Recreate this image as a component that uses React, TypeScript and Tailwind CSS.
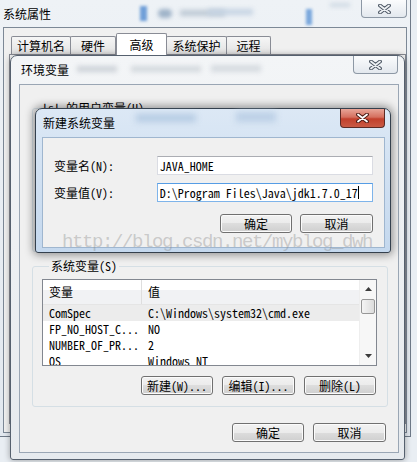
import type { ReactNode } from "react";

const cjk = "font-['Noto_Sans_CJK_SC','Noto_Sans',sans-serif]";
const ui = "font-['Noto_Sans_Mono_CJK_SC','Liberation_Mono','Noto_Sans_CJK_SC',monospace]";

type Tab = { label: string; w: string; active?: boolean };

const tabs: Tab[] = [
    { label: "计算机名", w: "w-[60px]" },
    { label: "硬件", w: "w-[46px]" },
    { label: "高级", w: "w-[51px]", active: true },
    { label: "系统保护", w: "w-[61px]" },
    { label: "远程", w: "w-[45px]" },
];

const rows = [
    { name: "ComSpec", value: "C:\\Windows\\system32\\cmd.exe", sel: true },
    { name: "FP_NO_HOST_C...", value: "NO" },
    { name: "NUMBER_OF_PR...", value: "2" },
    { name: "OS", value: "Windows_NT" },
];

// the "x" glyph on the title bar close buttons
function CloseGlyph({ red }: { red?: boolean }) {
    return (
        <svg width="13" height="10" viewBox="0 0 13 10">
            <path d="M2 1.5 L11 8.5 M11 1.5 L2 8.5" stroke={red ? "#4a1a14" : "#4c5663"} strokeWidth="3.8" strokeLinecap="round" />
            <path d="M2 1.5 L11 8.5 M11 1.5 L2 8.5" stroke={red ? "#ffffff" : "#eef1f4"} strokeWidth="1.8" strokeLinecap="round" />
        </svg>
    );
}

function Btn({ children, w }: { children: ReactNode; w: string }) {
    return (
        <div
            className={`${w} h-[19px] shrink-0 rounded-[3px] border border-[#707070] shadow-[inset_0_0_0_1px_#fbfbfb] bg-[linear-gradient(#f2f2f2_0%,#ebebeb_50%,#dddddd_50%,#cfcfcf_100%)] flex items-center justify-center text-[12px] leading-[12px] ${ui}`}
        >
            {children}
        </div>
    );
}

function SystemProps() {
    return (
        <div className="absolute left-0 top-0 w-[411px] h-[437px] border-r border-b border-[#6f7a88] bg-[linear-gradient(180deg,#eef2f6,#e2e8ef)]">
            {/* blurred desktop behind the glass */}
            <div className="absolute left-[140px] top-[6px] w-[7px] h-[15px] bg-[#6f9fd8] blur-[1.5px]" />
            <div className="absolute left-[158px] top-[9px] w-[14px] h-[9px] rounded-full bg-[#9fb3c8] blur-[2px]" />
            <div className="absolute left-[180px] top-[10px] w-[45px] h-[6px] bg-[#bcc8d4] blur-[2.5px]" />
            <div className="absolute left-[208px] top-[9px] w-[45px] h-[6px] bg-[#c6d4e3] blur-[2.5px]" />
            <div className="absolute left-[306px] top-[9px] w-[6px] h-[16px] bg-[#79a7dc] blur-[1.5px]" />
            <div className="absolute left-[330px] top-[3px] w-[20px] h-[4px] bg-[#cfd9e3] blur-[2px]" />

            <div className={`relative h-[27px] flex items-center pl-[3px] text-[12px] leading-[12px] ${cjk}`}>系统属性</div>
            <div className="absolute right-[3px] top-0 w-[46px] h-[18px] rounded-b-[4px] border border-t-0 border-[#8d98a5] bg-[linear-gradient(#fbfcfd,#e3e8ee)] flex items-center justify-center">
                <CloseGlyph />
            </div>

            <div className="ml-[3px] w-[404px] h-[406px] border border-[#7c8896] bg-[#f0f0f0]">
                <div className="flex items-end h-[26px] pl-[8px]">
                    {tabs.map((t) => (
                        <div
                            key={t.label}
                            className={
                                t.active
                                    ? `${t.w} h-[22px] -mb-px relative z-10 border border-b-0 border-[#898c95] rounded-t-[2px] bg-white flex items-center justify-center text-[12px] leading-[12px] ${ui}`
                                    : `${t.w} h-[18px] -ml-px border border-b-0 border-[#898c95] rounded-t-[2px] bg-[linear-gradient(#f6f6f6,#e2e2e2)] flex items-center justify-center text-[12px] leading-[12px] ${ui}`
                            }
                        >
                            {t.label}
                        </div>
                    ))}
                </div>
                <div className="ml-[5px] h-[370px] border-t border-l border-r border-[#898c95] bg-[#f9f9f9]" />
            </div>
        </div>
    );
}

function ListBox() {
    return (
        <div className="flex w-[335px] h-[87px] border border-[#828790] bg-white overflow-hidden">
            <div className="flex-1 overflow-hidden">
                <div className={`h-[25px] flex border-b border-[#e5e5e5] bg-[linear-gradient(#ffffff_0%,#ffffff_42%,#f1f2f4_42%,#f1f2f4_100%)] text-[12px] leading-[12px] ${ui}`}>
                    <div className="w-[99px] pl-[6px] border-r border-[#dedede] flex items-center">变量</div>
                    <div className="pl-[6px] flex items-center">值</div>
                </div>
                {rows.map((r) => (
                    <div key={r.name} className={`h-[16px] flex items-center text-[12px] leading-[12px] whitespace-nowrap ${ui} ${r.sel ? "bg-[#ececec]" : ""}`}>
                        <div className="w-[99px] pl-[6px] shrink-0">{r.name}</div>
                        <div className="pl-[6px]">{r.value}</div>
                    </div>
                ))}
            </div>
            <div className="w-[17px] flex flex-col bg-[#f7f7f7] border-l border-[#eeeeee]">
                <div className="h-[18px] flex items-center justify-center">
                    <svg width="7" height="4" viewBox="0 0 7 4"><path d="M0 4 L3.5 0 L7 4 Z" fill="#3c3c3c" /></svg>
                </div>
                <div className="mt-px mx-px h-[15px] rounded-[2px] border border-[#979797] bg-[linear-gradient(90deg,#f4f4f4,#dcdcdc)]" />
                <div className="flex-1" />
                <div className="h-[18px] flex items-center justify-center">
                    <svg width="7" height="4" viewBox="0 0 7 4"><path d="M0 0 L3.5 4 L7 0 Z" fill="#3c3c3c" /></svg>
                </div>
            </div>
        </div>
    );
}

function EnvVars() {
    return (
        <div className="absolute left-[10px] top-[55px] w-[395px] h-[405px] rounded-t-[7px] rounded-b-[3px] border border-[#55606e] bg-[linear-gradient(180deg,#f3f5f7,#e6eaee)] shadow-[0_0_6px_rgba(0,0,0,0.35)]">
            <div className="absolute left-[66px] top-[10px] w-[40px] h-[6px] bg-[#cdd2d8] blur-[2.5px]" />
            <div className="absolute left-[120px] top-[10px] w-[70px] h-[6px] bg-[#d3d8dd] blur-[2.5px]" />
            <div className="absolute left-[200px] top-[9px] w-[50px] h-[7px] bg-[#d6dbe0] blur-[2.5px]" />

            <div className={`relative h-[28px] flex items-center pl-[10px] text-[12px] leading-[12px] ${cjk}`}>环境变量</div>
            <div className="absolute right-[6px] top-0 w-[45px] h-[18px] rounded-b-[4px] border border-t-0 border-[#8d98a5] bg-[linear-gradient(#fbfcfd,#e3e8ee)] flex items-center justify-center">
                <CloseGlyph />
            </div>

            <div className="ml-[8px] w-[380px] h-[369px] border border-[#9aa6b4] bg-[#f0f0f0]">
                <fieldset className="mt-[17px] ml-[12px] w-[356px] h-[150px] rounded-[3px] border border-[#d5dfe5]">
                    <legend className={`ml-[7px] px-[2px] text-[12px] leading-[12px] ${ui}`}>lsl 的用户变量(U)</legend>
                </fieldset>
                <fieldset className="mt-[8px] ml-[12px] w-[356px] h-[147px] rounded-[3px] border border-[#d5dfe5] pl-[9px] pt-[7px]">
                    <legend className={`ml-[7px] px-[2px] text-[12px] leading-[12px] ${ui}`}>系统变量(S)</legend>
                    <ListBox />
                    <div className="mt-[10px] w-[334px] flex justify-end gap-[9px]">
                        <Btn w="w-[72px]">新建(W)...</Btn>
                        <Btn w="w-[73px]">编辑(I)...</Btn>
                        <Btn w="w-[72px]">删除(L)</Btn>
                    </div>
                </fieldset>
                <div className="mt-[16px] pr-[12px] flex justify-end gap-[9px]">
                    <Btn w="w-[72px]">确定</Btn>
                    <Btn w="w-[73px]">取消</Btn>
                </div>
            </div>
        </div>
    );
}

function NewVarDialog() {
    return (
        <div className="absolute left-[35px] top-[108px] w-[356px] h-[145px] rounded-t-[7px] rounded-b-[3px] border border-[#34404d] bg-[linear-gradient(180deg,#dce8f5,#c4d8ee)] shadow-[0_0_9px_2px_rgba(0,0,0,0.4)]">
            <div className="absolute left-[100px] top-[5px] w-[60px] h-[8px] bg-[#b5cbe3] blur-[3px]" />
            <div className="absolute left-[200px] top-[3px] w-[40px] h-[10px] bg-[#bcd0e6] blur-[3px]" />

            <div className={`relative h-[28px] flex items-center pl-[7px] text-[12px] leading-[12px] ${cjk}`}>新建系统变量</div>
            <div className="absolute right-[5px] top-0 w-[45px] h-[19px] rounded-b-[4px] border border-t-0 border-[#5c2a24] bg-[linear-gradient(#e8a598_0%,#d5705f_45%,#c2402c_55%,#c95a44_100%)] flex items-center justify-center">
                <CloseGlyph red />
            </div>

            <div className="ml-[6px] w-[343px] h-[111px] border border-[#9fb6cf] bg-[#f0f0f0] pt-[18px] pl-[11px] pr-[11px]">
                <div className="flex items-center h-[19px]">
                    <div className={`w-[103px] text-[12px] leading-[12px] ${ui}`}>变量名(N):</div>
                    <div className={`w-[217px] h-[19px] border border-[#dadce3] border-t-[#abadb3] bg-white pl-[2px] flex items-center text-[12px] leading-[12px] ${ui}`}>JAVA_HOME</div>
                </div>
                <div className="mt-[8px] flex items-center h-[19px]">
                    <div className={`w-[103px] text-[12px] leading-[12px] ${ui}`}>变量值(V):</div>
                    <div className={`w-[217px] h-[19px] border border-[#7eb4ea] border-t-[#569de5] bg-white pl-[2px] flex items-center whitespace-nowrap text-[12px] leading-[12px] ${ui}`}>
                        D:\Program Files\Java\jdk1.7.0_17
                        <span className="inline-block w-px h-[13px] bg-black" />
                    </div>
                </div>
                <div className="mt-[12px] flex justify-end gap-[8px]">
                    <Btn w="w-[72px]">确定</Btn>
                    <Btn w="w-[73px]">取消</Btn>
                </div>
            </div>
        </div>
    );
}

export default function App() {
    return (
        <div className="relative w-[417px] h-[462px] overflow-hidden bg-[#e9eef3] text-black">
            <SystemProps />
            <EnvVars />
            <NewVarDialog />
            <div className="absolute left-[62px] top-[232px] text-[19px] leading-[20px] tracking-[-1.4px] whitespace-nowrap font-['Liberation_Mono',monospace] text-[rgba(140,140,140,0.4)]">
                http://blog.csdn.net/myblog_dwh
            </div>
        </div>
    );
}
